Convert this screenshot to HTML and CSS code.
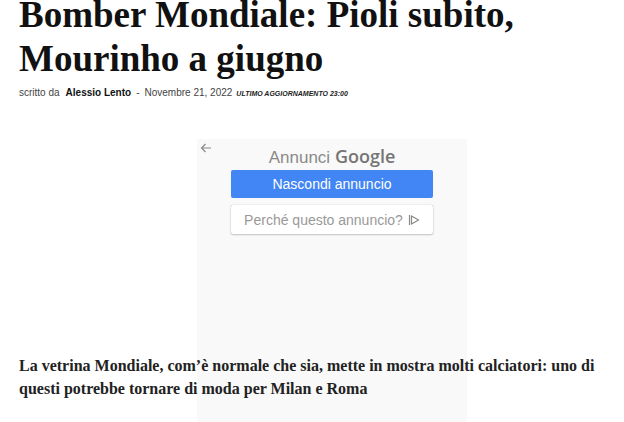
FILE: index.html
```html
<!DOCTYPE html>
<html lang="it">
<head>
    <meta charset="UTF-8">
    <meta name="viewport" content="width=device-width, initial-scale=1.0">
    <title>Bomber Mondiale: Pioli subito, Mourinho a giugno</title>
    <link rel="stylesheet" href="styles.css">
</head>
<body>
    <div class="article">
        <!-- Header -->
        <h1 class="title">Bomber Mondiale: Pioli subito, Mourinho a giugno</h1>
        <div class="meta">
            <span class="by">scritto da</span>
            <span class="author">Alessio Lento</span>
            <span class="sep">-</span>
            <span class="date">Novembre 21, 2022</span>
            <span class="updated">Ultimo aggiornamento 23:00</span>
        </div>

        <!-- Ad slot -->
        <div class="ad">
            <svg class="ad-back" width="12" height="12" viewBox="0 0 12 12">
                <path d="M11 6H1.5M5.5 2L1.5 6l4 4" fill="none" stroke="#8a8a8a" stroke-width="1.2"/>
            </svg>
            <div class="ad-head">Annunci <b>Google</b></div>
            <button class="ad-btn ad-hide">Nascondi annuncio</button>
            <button class="ad-btn ad-why">Perché questo annuncio?
                <svg width="12" height="12" viewBox="0 0 12 12">
                    <path d="M1.5 1v10M3.5 2l7 4-7 4z" fill="none" stroke="#8a8a8a" stroke-width="1.2"/>
                </svg>
            </button>
        </div>

        <!-- Intro -->
        <p class="intro">La vetrina Mondiale, com’è normale che sia, mette in mostra molti calciatori: uno di questi potrebbe tornare di moda per Milan e Roma</p>
    </div>
</body>
</html>
```

FILE: styles.css
```css
body {
    margin: 0;
    background-color: #fff;
    overflow: hidden;
}
.article {
    padding: 0 19px 60px;
    margin-top: -7px;
}
.title {
    font-family: "Liberation Serif", "Times New Roman", serif;
    font-size: 37px;
    line-height: 44px;
    font-weight: bold;
    color: #111;
    margin: 0;
}
.meta {
    font-family: "Liberation Sans", Arial, sans-serif;
    font-size: 10px;
    color: #444;
    margin-top: 6px;
    display: flex;
    align-items: baseline;
    gap: 4px;
}
.author {
    font-weight: bold;
    color: #111;
    margin-left: 2px;
}
.sep {
    margin: 0 1px;
}
.updated {
    font-size: 7px;
    font-weight: bold;
    font-style: italic;
    text-transform: uppercase;
    color: #222;
}
.ad {
    position: relative;
    width: 270px;
    height: 300px;
    margin: 41px 0 -85px 178px;
    background-color: #f9f9f9;
    display: flex;
    flex-direction: column;
    align-items: center;
    font-family: "Liberation Sans", Arial, sans-serif;
}
.ad-back {
    position: absolute;
    left: 3px;
    top: 3px;
}
.ad-head {
    font-size: 17px;
    color: #8a8a8a;
    margin-top: 5px;
    height: 26px;
}
.ad-head b {
    font-family: "Open Sans", "Liberation Sans", sans-serif;
    font-weight: 600;
    font-size: 18px;
    color: #757575;
}
.ad-btn {
    width: 202px;
    height: 28px;
    border-radius: 2px;
    font-family: "Liberation Sans", Arial, sans-serif;
    font-size: 14px;
    padding: 0;
}
.ad-hide {
    background-color: #4285f4;
    color: #fff;
    border: none;
}
.ad-why {
    margin-top: 7px;
    height: 29px;
    background-color: #fff;
    color: #999;
    border: none;
    box-shadow: 0 0 1px rgba(0,0,0,0.35), 0 1px 2px rgba(0,0,0,0.2);
    display: flex;
    align-items: center;
    justify-content: center;
    gap: 5px;
}
.intro {
    position: relative;
    font-family: "Liberation Serif", "Times New Roman", serif;
    font-size: 16px;
    line-height: 23px;
    font-weight: bold;
    color: #222;
    margin: 0;
    padding-right: 2px;
}
```
